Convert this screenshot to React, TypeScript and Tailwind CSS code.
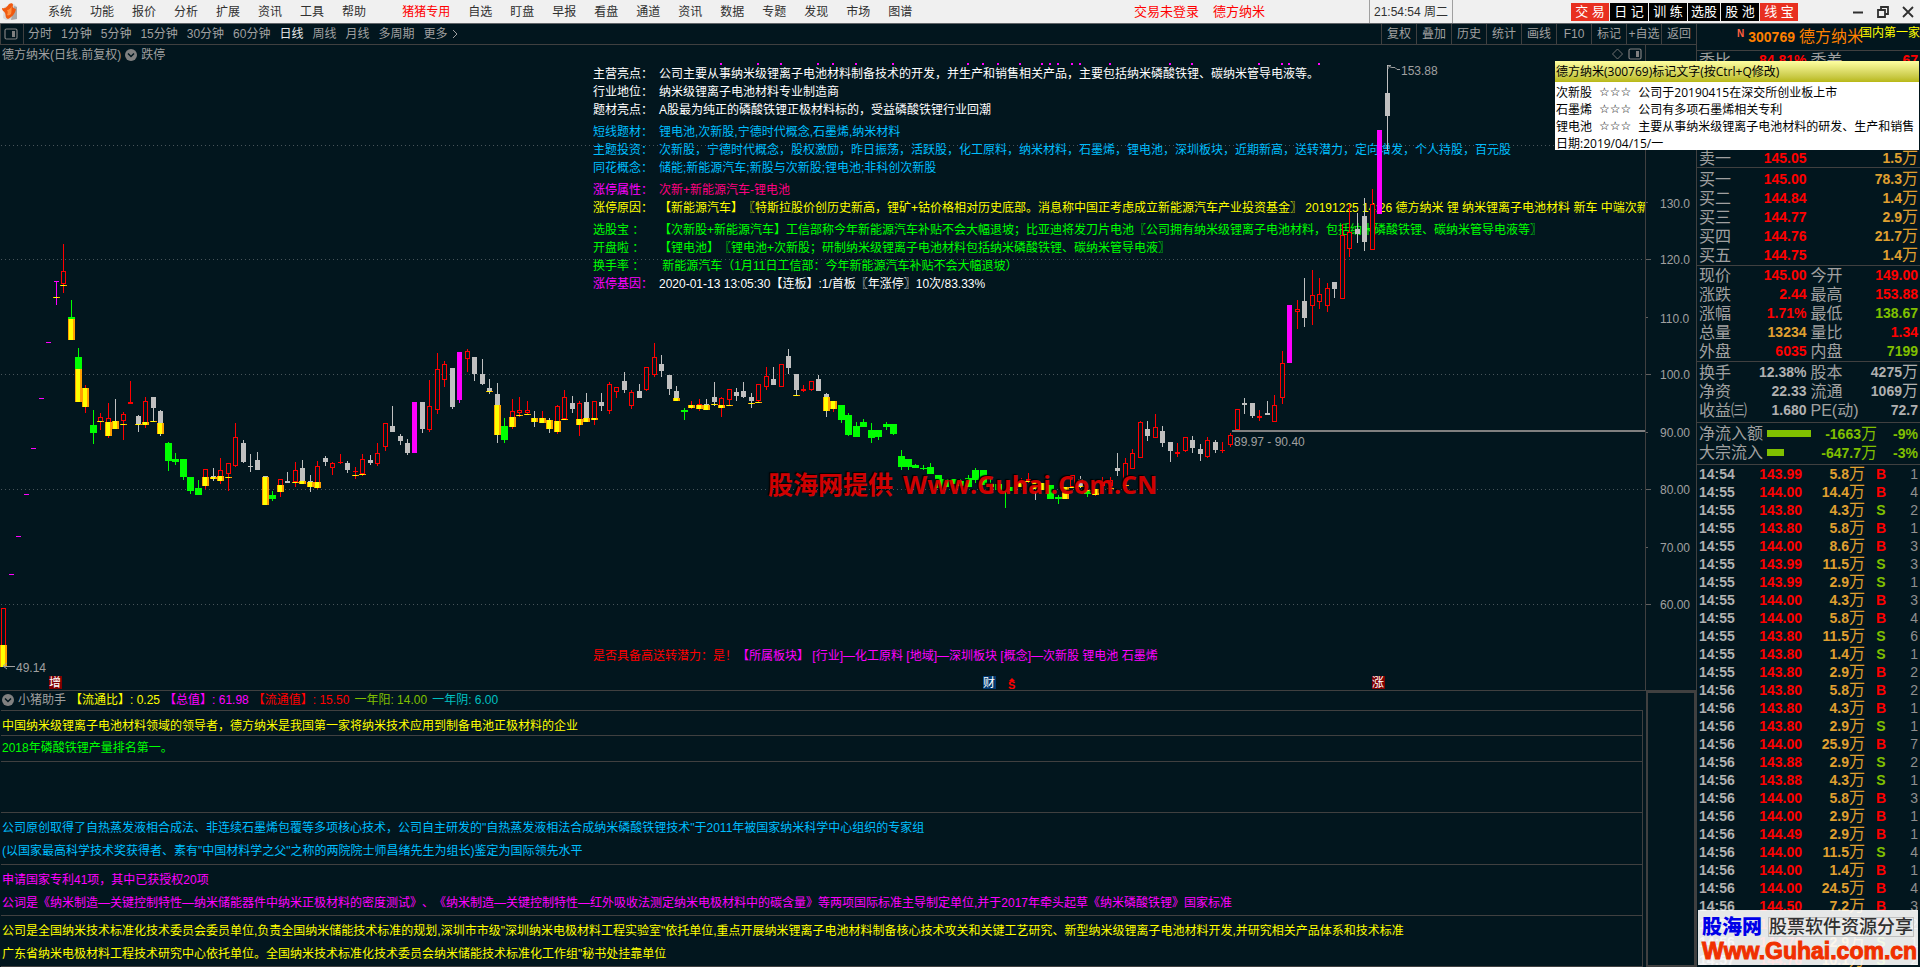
import { ReactNode } from "react";

type Kind = "r" | "w" | "g" | "m";
// x, high, open/close top, open/close bottom, low, kind
type Candle = [number, number, number, number, number, Kind];
// x, top, bottom
type Mark = [number, number, number];

const candles: Candle[] = [
  [3, 608, 608, 667, 667, "r"],
  [63, 244, 271, 284, 293, "r"],
  [71, 300, 317, 340, 340, "g"],
  [78, 348, 357, 402, 402, "g"],
  [85, 385, 388, 407, 413, "r"],
  [93, 410, 425, 433, 444, "g"],
  [100, 413, 417, 422, 430, "r"],
  [108, 403, 418, 436, 438, "r"],
  [115, 399, 421, 429, 429, "w"],
  [123, 412, 414, 421, 440, "r"],
  [130, 381, 402, 404, 404, "r"],
  [138, 415, 416, 424, 432, "w"],
  [145, 397, 401, 425, 428, "r"],
  [153, 397, 397, 408, 421, "w"],
  [160, 410, 411, 434, 436, "w"],
  [168, 442, 443, 461, 471, "g"],
  [175, 453, 459, 462, 465, "g"],
  [183, 459, 459, 477, 480, "g"],
  [190, 477, 477, 491, 494, "g"],
  [198, 480, 488, 495, 495, "g"],
  [205, 469, 469, 486, 489, "r"],
  [213, 468, 476, 479, 481, "w"],
  [220, 458, 470, 481, 484, "r"],
  [228, 463, 463, 474, 491, "r"],
  [235, 423, 437, 466, 467, "r"],
  [243, 440, 443, 462, 463, "w"],
  [250, 454, 466, 467, 472, "w"],
  [257, 452, 460, 470, 470, "w"],
  [265, 476, 476, 505, 505, "w"],
  [272, 491, 495, 499, 501, "g"],
  [280, 479, 479, 492, 497, "r"],
  [287, 472, 481, 483, 483, "w"],
  [295, 462, 470, 482, 487, "r"],
  [302, 460, 468, 484, 484, "w"],
  [310, 475, 481, 487, 492, "w"],
  [317, 461, 466, 488, 489, "r"],
  [325, 456, 458, 462, 466, "w"],
  [332, 462, 463, 468, 475, "r"],
  [340, 454, 462, 463, 464, "r"],
  [347, 461, 463, 470, 473, "w"],
  [355, 467, 471, 472, 479, "r"],
  [362, 454, 459, 474, 476, "r"],
  [370, 455, 460, 463, 465, "w"],
  [377, 443, 453, 464, 466, "r"],
  [385, 423, 423, 447, 451, "r"],
  [392, 406, 426, 432, 432, "w"],
  [400, 434, 436, 441, 445, "w"],
  [407, 439, 443, 453, 455, "w"],
  [414, 402, 402, 453, 453, "m"],
  [422, 402, 402, 429, 433, "w"],
  [429, 380, 406, 430, 432, "r"],
  [437, 353, 369, 410, 414, "r"],
  [444, 361, 364, 380, 387, "r"],
  [452, 368, 368, 407, 409, "w"],
  [459, 352, 352, 400, 403, "m"],
  [467, 349, 351, 359, 372, "r"],
  [474, 357, 357, 374, 381, "w"],
  [482, 359, 374, 384, 385, "w"],
  [489, 379, 388, 392, 394, "w"],
  [497, 383, 394, 435, 443, "w"],
  [504, 418, 426, 440, 443, "g"],
  [512, 399, 411, 427, 429, "r"],
  [519, 397, 410, 413, 417, "r"],
  [527, 401, 410, 413, 415, "r"],
  [534, 411, 418, 422, 427, "w"],
  [542, 411, 418, 423, 423, "r"],
  [549, 418, 420, 429, 433, "w"],
  [557, 405, 406, 432, 434, "r"],
  [564, 390, 397, 419, 420, "r"],
  [572, 396, 403, 409, 413, "w"],
  [579, 401, 403, 425, 436, "r"],
  [586, 393, 402, 422, 422, "w"],
  [594, 401, 401, 419, 425, "r"],
  [601, 393, 402, 406, 411, "w"],
  [609, 382, 384, 411, 414, "r"],
  [616, 387, 387, 392, 398, "r"],
  [624, 372, 381, 390, 393, "w"],
  [631, 390, 392, 406, 409, "r"],
  [639, 384, 391, 398, 398, "w"],
  [646, 367, 367, 390, 391, "r"],
  [654, 343, 357, 375, 377, "r"],
  [661, 355, 364, 371, 377, "w"],
  [669, 375, 375, 389, 395, "w"],
  [676, 386, 391, 401, 401, "w"],
  [684, 408, 410, 412, 420, "g"],
  [691, 401, 405, 408, 409, "r"],
  [699, 399, 404, 409, 411, "r"],
  [706, 399, 404, 410, 410, "w"],
  [714, 382, 397, 402, 406, "w"],
  [721, 397, 398, 408, 417, "r"],
  [729, 389, 389, 400, 406, "r"],
  [736, 388, 392, 396, 401, "w"],
  [743, 382, 391, 397, 398, "w"],
  [751, 393, 397, 401, 408, "w"],
  [758, 384, 384, 401, 403, "r"],
  [766, 367, 376, 387, 390, "r"],
  [773, 367, 379, 385, 385, "w"],
  [781, 364, 364, 387, 387, "r"],
  [788, 349, 356, 368, 374, "w"],
  [796, 374, 374, 390, 396, "w"],
  [803, 385, 389, 391, 392, "r"],
  [811, 381, 381, 390, 391, "r"],
  [818, 375, 379, 391, 391, "w"],
  [826, 393, 394, 411, 417, "w"],
  [833, 401, 401, 409, 412, "r"],
  [841, 405, 405, 420, 423, "g"],
  [848, 413, 415, 435, 436, "g"],
  [856, 422, 426, 437, 437, "g"],
  [863, 419, 422, 427, 427, "g"],
  [871, 423, 430, 438, 443, "g"],
  [878, 430, 430, 437, 440, "g"],
  [886, 422, 424, 427, 430, "g"],
  [893, 424, 424, 434, 435, "g"],
  [901, 450, 456, 467, 470, "g"],
  [908, 459, 459, 467, 470, "g"],
  [915, 464, 465, 468, 468, "g"],
  [923, 465, 468, 469, 470, "g"],
  [930, 463, 467, 474, 474, "g"],
  [938, 475, 475, 488, 488, "g"],
  [945, 479, 479, 487, 487, "g"],
  [953, 479, 479, 484, 484, "g"],
  [960, 479, 481, 486, 486, "g"],
  [968, 475, 478, 487, 487, "g"],
  [975, 468, 470, 480, 483, "g"],
  [983, 470, 470, 485, 485, "g"],
  [990, 478, 484, 487, 489, "g"],
  [998, 481, 484, 490, 490, "g"],
  [1005, 490, 490, 492, 508, "g"],
  [1013, 486, 487, 491, 491, "g"],
  [1021, 478, 482, 487, 487, "r"],
  [1028, 473, 479, 481, 483, "r"],
  [1035, 481, 482, 489, 500, "w"],
  [1043, 483, 483, 490, 490, "r"],
  [1050, 485, 485, 499, 499, "g"],
  [1058, 495, 497, 499, 504, "g"],
  [1065, 487, 487, 499, 499, "w"],
  [1072, 475, 475, 487, 487, "r"],
  [1080, 476, 479, 486, 488, "w"],
  [1087, 490, 491, 494, 497, "g"],
  [1095, 489, 489, 495, 496, "r"],
  [1102, 477, 481, 486, 486, "r"],
  [1110, 477, 480, 486, 488, "r"],
  [1117, 453, 468, 471, 476, "w"],
  [1125, 458, 463, 481, 485, "r"],
  [1132, 449, 453, 469, 469, "r"],
  [1140, 421, 422, 458, 458, "r"],
  [1147, 421, 429, 436, 441, "w"],
  [1155, 414, 427, 438, 438, "r"],
  [1162, 426, 431, 443, 447, "w"],
  [1170, 442, 442, 451, 462, "w"],
  [1177, 443, 452, 454, 457, "r"],
  [1185, 437, 437, 451, 452, "r"],
  [1192, 436, 440, 448, 453, "w"],
  [1200, 444, 449, 454, 461, "w"],
  [1207, 437, 440, 457, 458, "r"],
  [1215, 440, 442, 450, 453, "w"],
  [1222, 442, 450, 451, 453, "r"],
  [1230, 433, 435, 445, 447, "r"],
  [1237, 409, 409, 430, 430, "r"],
  [1244, 398, 403, 405, 414, "w"],
  [1252, 403, 403, 416, 418, "w"],
  [1259, 410, 416, 418, 421, "r"],
  [1267, 401, 413, 415, 415, "w"],
  [1274, 395, 405, 422, 422, "r"],
  [1282, 351, 363, 398, 404, "r"],
  [1289, 305, 305, 363, 363, "m"],
  [1297, 300, 309, 312, 329, "r"],
  [1304, 278, 301, 318, 327, "w"],
  [1312, 270, 295, 306, 325, "r"],
  [1319, 278, 294, 302, 309, "r"],
  [1327, 283, 288, 306, 312, "r"],
  [1334, 282, 282, 289, 298, "w"],
  [1342, 224, 235, 299, 299, "r"],
  [1349, 204, 232, 249, 257, "r"],
  [1357, 213, 229, 234, 243, "w"],
  [1364, 198, 216, 242, 251, "w"],
  [1372, 189, 204, 250, 250, "r"],
  [1379, 130, 130, 214, 214, "m"],
  [1387, 65, 93, 116, 151, "w"],
];

const marks: Mark[] = [
  [3, 645, 667],
  [56, 297, 298],
  [63, 285, 286],
  [71, 319, 340],
  [78, 369, 402],
  [85, 388, 407],
  [100, 421, 422],
  [108, 422, 436],
  [115, 421, 429],
  [123, 424, 425],
  [138, 424, 425],
  [145, 422, 425],
  [153, 421, 422],
  [160, 423, 434],
  [205, 477, 486],
  [213, 477, 479],
  [220, 476, 481],
  [228, 477, 478],
  [265, 477, 505],
  [280, 485, 492],
  [295, 482, 483],
  [302, 481, 484],
  [310, 482, 487],
  [317, 482, 488],
  [355, 475, 476],
  [362, 474, 475],
  [489, 391, 392],
  [497, 405, 435],
  [512, 417, 427],
  [519, 415, 416],
  [527, 414, 415],
  [534, 418, 422],
  [542, 418, 423],
  [549, 420, 429],
  [557, 421, 432],
  [564, 419, 420],
  [579, 419, 425],
  [586, 418, 422],
  [594, 418, 420],
  [676, 398, 401],
  [691, 405, 408],
  [699, 405, 409],
  [706, 405, 410],
  [714, 404, 405],
  [721, 405, 408],
  [729, 405, 406],
  [751, 403, 404],
  [758, 402, 403],
  [796, 395, 396],
  [826, 397, 411],
  [833, 401, 409],
  [1005, 491, 492],
  [1021, 482, 487],
  [1028, 481, 482],
  [1035, 482, 489],
  [1043, 483, 490],
  [1065, 487, 499],
  [1072, 487, 488],
  [1080, 486, 487],
  [1087, 490, 491],
  [1095, 489, 495],
  [1110, 488, 489],
  [1125, 485, 486],
];

const limitDashes = [
  [11, 574],
  [18, 536],
  [26, 494],
  [33, 448],
  [41, 398],
  [48, 342],
];

const topDots = [
  721, 758, 781, 818, 833, 856, 893, 968, 983, 998, 1020, 1042, 1050, 1058, 1072, 1080, 1110, 1170,
  1192, 1259, 1282, 1289, 1319,
];

const gridLines = [145, 259, 374, 489, 604];

const axisLabels = [
  { y: 204, text: "130.0" },
  { y: 260, text: "120.0" },
  { y: 319, text: "110.0" },
  { y: 375, text: "100.0" },
  { y: 433, text: "90.00" },
  { y: 490, text: "80.00" },
  { y: 548, text: "70.00" },
  { y: 605, text: "60.00" },
];

const candleColor = { r: "#ff0000", w: "#c0c0c0", g: "#00ff00", m: "#ff00ff" };

const menuLeft = ["系统", "功能", "报价", "分析", "扩展", "资讯", "工具", "帮助"];
const menuRight = ["自选", "盯盘", "早报", "看盘", "通道", "资讯", "数据", "专题", "发现", "市场", "图谱"];
const periods = [
  "分时",
  "1分钟",
  "5分钟",
  "15分钟",
  "30分钟",
  "60分钟",
  "日线",
  "周线",
  "月线",
  "多周期",
];
const tools = ["复权", "叠加", "历史", "统计", "画线", "F10", "标记", "+自选", "返回"];
const shortcuts = [
  { text: "交 易", red: true },
  { text: "日 记", red: false },
  { text: "训 练", red: false },
  { text: "选股", red: false },
  { text: "股 池", red: false },
  { text: "线 宝", red: true },
];

const noteGroups = [
  [
    {
      label: "主营亮点：",
      text: "公司主要从事纳米级锂离子电池材料制备技术的开发，并生产和销售相关产品，主要包括纳米磷酸铁锂、碳纳米管导电液等。",
      color: "text-white",
    },
    { label: "行业地位：", text: "纳米级锂离子电池材料专业制造商", color: "text-white" },
    {
      label: "题材亮点：",
      text: "A股最为纯正的磷酸铁锂正极材料标的，受益磷酸铁锂行业回潮",
      color: "text-white",
    },
  ],
  [
    {
      label: "短线题材：",
      text: "锂电池,次新股,宁德时代概念,石墨烯,纳米材料",
      color: "text-[#00bfff]",
    },
    {
      label: "主题投资：",
      text: "次新股，宁德时代概念，股权激励，昨日振荡，活跃股，化工原料，纳米材料，石墨烯，锂电池，深圳板块，近期新高，送转潜力，定向增发，个人持股，百元股",
      color: "text-[#00bfff]",
    },
    {
      label: "同花概念：",
      text: "储能;新能源汽车;新股与次新股;锂电池;非科创次新股",
      color: "text-[#00bfff]",
    },
  ],
  [
    {
      label: "涨停属性：",
      text: "次新+新能源汽车-锂电池",
      color: "text-[#ff0080]",
      labelColor: "text-[#ff00ff]",
    },
    {
      label: "涨停原因：",
      text: "【新能源汽车】〖特斯拉股价创历史新高，锂矿+钴价格相对历史底部。消息称中国正考虑成立新能源汽车产业投资基金〗 20191225 14:26 德方纳米 锂 纳米锂离子电池材料 新车 中端次新",
      color: "text-[#ffff00]",
    },
  ],
  [
    {
      label: "选股宝 ：",
      text: "【次新股+新能源汽车】工信部称今年新能源汽车补贴不会大幅退坡；比亚迪将发刀片电池〖公司拥有纳米级锂离子电池材料，包括纳米磷酸铁锂、碳纳米管导电液等〗",
      color: "text-[#00ff00]",
    },
    {
      label: "开盘啦 ：",
      text: "【锂电池】〖锂电池+次新股；研制纳米级锂离子电池材料包括纳米磷酸铁锂、碳纳米管导电液〗",
      color: "text-[#00ff00]",
    },
    {
      label: "换手率 ：",
      text: " 新能源汽车（1月11日工信部：今年新能源汽车补贴不会大幅退坡）",
      color: "text-[#00ff00]",
    },
    {
      label: "涨停基因：",
      text: "2020-01-13 13:05:30【连板】:1/首板〖年涨停〗10次/83.33%",
      color: "text-white",
      labelColor: "text-[#ff00ff]",
    },
  ],
];

const bids = [
  ["买一", "145.00", "78.3"],
  ["买二", "144.84", "1.4"],
  ["买三", "144.77", "2.9"],
  ["买四", "144.76", "21.7"],
  ["买五", "144.75", "1.4"],
];

const RED = "text-[#ff0000]";
const LIME = "text-[#80c000]";
const AMBER = "text-[#e0a030]";
const GRAY = "text-[#b0b0b0]";

const quotes = [
  ["现价", "145.00", RED, "今开", "149.00", RED],
  ["涨跌", "2.44", RED, "最高", "153.88", RED],
  ["涨幅", "1.71%", RED, "最低", "138.67", LIME],
  ["总量", "13234", AMBER, "量比", "1.34", RED],
  ["外盘", "6035", RED, "内盘", "7199", LIME],
];

const ticks = [
  ["14:54", "143.99", "5.8", "B", "1"],
  ["14:55", "144.00", "14.4", "B", "4"],
  ["14:55", "143.80", "4.3", "S", "2"],
  ["14:55", "143.80", "5.8", "B", "1"],
  ["14:55", "144.00", "8.6", "B", "3"],
  ["14:55", "143.99", "11.5", "S", "3"],
  ["14:55", "143.99", "2.9", "S", "1"],
  ["14:55", "144.00", "4.3", "B", "3"],
  ["14:55", "144.00", "5.8", "B", "4"],
  ["14:55", "143.80", "11.5", "S", "6"],
  ["14:55", "143.80", "1.4", "S", "1"],
  ["14:55", "143.80", "2.9", "B", "2"],
  ["14:56", "143.80", "5.8", "B", "2"],
  ["14:56", "143.80", "4.3", "B", "1"],
  ["14:56", "143.80", "2.9", "S", "1"],
  ["14:56", "144.00", "25.9", "B", "7"],
  ["14:56", "143.88", "2.9", "S", "2"],
  ["14:56", "143.88", "4.3", "S", "1"],
  ["14:56", "144.00", "5.8", "B", "3"],
  ["14:56", "144.00", "2.9", "B", "1"],
  ["14:56", "144.49", "2.9", "B", "1"],
  ["14:56", "144.00", "11.5", "S", "4"],
  ["14:56", "144.00", "1.4", "B", "1"],
  ["14:56", "144.00", "24.5", "B", "4"],
  ["14:56", "144.50", "7.2", "B", "3"],
  ["14:56", "144.50", "4.3", "B", "2"],
  ["14:56", "144.76", "2.9", "S", "1"],
  ["14:57", "144.76", "10.1", "S", "2"],
];

const Wan = () => <span className="text-[16px] font-normal leading-none">万</span>;

const PanelIcon = ({ className = "" }: { className?: string }) => (
  <svg width="14" height="12" viewBox="0 0 14 12" className={className}>
    <rect x="1" y="1" width="12" height="10" rx="1.5" fill="none" stroke="#808080" strokeWidth="1.2" />
    <rect x="8" y="3" width="3" height="6" fill="#808080" />
  </svg>
);

const DownIcon = () => (
  <svg width="12" height="12" viewBox="0 0 12 12">
    <circle cx="6" cy="6" r="6" fill="#808080" />
    <path d="M3 4.5 6 7.5 9 4.5" fill="none" stroke="#02161e" strokeWidth="1.5" />
  </svg>
);

const TitleBar = () => (
  <header className="flex h-[24px] shrink-0 items-center whitespace-nowrap border-b border-[#606468] bg-[#f0f0f0] text-[12px] text-[#303030]">
    <svg width="16" height="18" viewBox="0 0 16 18" className="ml-[2px] shrink-0">
      <path d="M2 4 12 1l3 3v12l-11 1-3-2z" fill="#d8d8d8" />
      <path d="M12 3l3 1v12l-6 1z" fill="#a8a8a8" />
      <path d="M0 5c3 1 4 0 7-4 2-1 4-1 4 1-1 3 1 3 3 4-1 5-4 8-8 10-3-1-2-4-3-6C2 8 0 8 0 5z" fill="#f05a10" />
      <path d="M5 7c2 0 4-2 5-4-1 4 0 5-1 8-1 1-3 2-4 1 1-2 1-3 0-5z" fill="#ff9040" />
    </svg>
    <nav className="ml-[30px] flex gap-[18px]">
      {menuLeft.map((m) => (
        <button key={m}>{m}</button>
      ))}
      <button className="ml-[18px] text-[#ff0000]">猪猪专用</button>
      {menuRight.map((m) => (
        <button key={m}>{m}</button>
      ))}
    </nav>
    <div className="ml-auto flex h-full items-center">
      <button className="text-[13px] text-[#ff0000]">交易未登录</button>
      <button className="ml-[14px] text-[13px] text-[#ff0000]">德方纳米</button>
      <div className="ml-[104px] flex h-full w-[84px] items-center justify-center border-x border-[#a0a0a0]">
        21:54:54 周二
      </div>
      <div className="ml-[118px] flex gap-px">
        {shortcuts.map((s) => (
          <button
            key={s.text}
            className={`h-[18px] text-center text-[13px] leading-[18px] text-white ${
              s.red ? "bg-[#e83020]" : "bg-black"
            } ${s.text.length > 2 ? "w-[38px]" : "w-[32px]"}`}
          >
            {s.text}
          </button>
        ))}
      </div>
      <div className="ml-[54px] mr-[6px] flex gap-[13px]">
        <button aria-label="最小化">
          <svg width="12" height="12" viewBox="0 0 12 12">
            <path d="M1 6.5h10" stroke="#303030" strokeWidth="2" />
          </svg>
        </button>
        <button aria-label="还原">
          <svg width="12" height="12" viewBox="0 0 12 12" fill="none" stroke="#303030" strokeWidth="1.8">
            <path d="M1 4h7v7H1z" />
            <path d="M4 4V1h7v7H8" />
          </svg>
        </button>
        <button aria-label="关闭">
          <svg width="12" height="12" viewBox="0 0 12 12">
            <path d="M1 1l10 10M11 1 1 11" stroke="#303030" strokeWidth="1.8" />
          </svg>
        </button>
      </div>
    </div>
  </header>
);

const Toolbar = () => (
  <div className="flex h-[21px] shrink-0 items-stretch whitespace-nowrap border-b border-[#404040] text-[12px] text-[#a0a0a0]">
    <button aria-label="侧栏" className="flex w-[24px] items-center border-x border-[#404040] pl-[3px]">
      <PanelIcon />
    </button>
    <div className="flex gap-[9px] pl-[4px]">
      {periods.map((p) => (
        <button key={p} className={p === "日线" ? "text-[#e8e8e8]" : ""}>
          {p}
        </button>
      ))}
      <button className="flex items-center gap-[4px]">
        更多
        <svg width="6" height="10" viewBox="0 0 6 10">
          <path d="M1 1l4 4-4 4" fill="none" stroke="#a0a0a0" />
        </svg>
      </button>
    </div>
    <div className="ml-auto flex">
      {tools.map((t) => (
        <button key={t} className="w-[35px] border-l border-[#404040]">
          {t}
        </button>
      ))}
    </div>
  </div>
);

const Candles = () => (
  <>
    {candles.map(([x, high, top, bottom, low, kind]) => {
      const color = candleColor[kind];
      const half = kind === "g" ? 3 : 2;
      const hollow = kind === "r" && bottom - top > 2;
      return (
        <g key={x} shapeRendering="crispEdges">
          <rect x={x} y={high} width="1" height={Math.max(low - high, 1)} fill={color} />
          {hollow ? (
            <rect
              x={x - 1.5}
              y={top + 0.5}
              width="4"
              height={bottom - top - 1}
              fill="#02161e"
              stroke={color}
            />
          ) : (
            <rect
              x={x - half}
              y={top}
              width={half * 2 + 1}
              height={Math.max(bottom - top, 1)}
              fill={color}
            />
          )}
        </g>
      );
    })}
    {marks.map(([x, top, bottom]) => (
      <g key={x} shapeRendering="crispEdges">
        <rect x={x - 3} y={top} width="7" height={bottom - top} fill="#ffa000" />
        <rect x={x - 2} y={top} width="4" height={bottom - top} fill="#ffff00" />
      </g>
    ))}
  </>
);

const Chart = () => (
  <div className="relative min-w-0 flex-1 overflow-hidden border-r border-[#404040]">
    <div className="absolute inset-y-0 left-[593px] flex flex-col justify-between whitespace-nowrap pb-[25px] pt-[20px] text-[12px] leading-[18px]">
      <div className="flex flex-col gap-[4px]">
        {noteGroups.map((group, i) => (
          <div key={i}>
            {group.map((n) => (
              <div key={n.label} className={`flex h-[18px] ${n.color}`}>
                <span className={`w-[66px] shrink-0 ${"labelColor" in n ? n.labelColor : ""}`}>
                  {n.label}
                </span>
                <span className="whitespace-pre">{n.text}</span>
              </div>
            ))}
          </div>
        ))}
      </div>
      <div className="flex">
        <span className="text-[#ff0000]">是否具备高送转潜力：是！</span>
        <span className="text-[#ff00ff]">
          【所属板块】 [行业]—化工原料 [地域]—深圳板块 [概念]—次新股 锂电池 石墨烯
        </span>
      </div>
    </div>

    <svg
      viewBox="0 45 1645 645"
      preserveAspectRatio="xMinYMin meet"
      className="absolute inset-0 h-full w-full text-[12px]"
    >
      {gridLines.map((y) => (
        <path key={y} d={`M1 ${y}.5H1645`} stroke="#48545a" strokeDasharray="1 3" />
      ))}
      {topDots.map((x) => (
        <rect key={x} x={x - 1} y="63" width="2" height="2" fill="#ff00ff" />
      ))}
      {limitDashes.map(([x, y]) => (
        <rect key={x} x={x - 2} y={y} width="5" height="1" fill="#ff00ff" />
      ))}
      <path d="M54 281.5h5M56.5 281v24" stroke="#ff00ff" />
      <Candles />
      <path d="M1232 431h413" stroke="#808080" strokeWidth="2" />
      <path d="M1388 65.500h3M1388 69v-3M1389 66.500l3 1 3 0 2 2h3" fill="none" stroke="#a0a0a0" />
      <path d="M3 666.500h12M3 666l4-3M3 666l4 3" fill="none" stroke="#a0a0a0" />
      <g fill="#a0a0a0">
        <text x="1401" y="75">153.88</text>
        <text x="16" y="672">49.14</text>
        <text x="1234" y="446">89.97 - 90.40</text>
      </g>
      <rect x="49" y="676" width="13" height="13" fill="#800000" />
      <rect x="983" y="676" width="13" height="13" fill="#003870" />
      <rect x="1372" y="676" width="13" height="13" fill="#800000" />
      <g fill="#ffffff" textAnchor="middle">
        <text x="55" y="687">增</text>
        <text x="989" y="687">财</text>
        <text x="1378" y="687">涨</text>
      </g>
      <path d="M1009 681l3-3 3 3z" fill="#ff0000" />
      <text x="1008" y="689" fill="#ff0000" className="text-[11px] font-bold">
        S
      </text>
      <path d="M1617.500 49l5 5-5 5-5-5z" fill="none" stroke="#707070" />
    </svg>

    <div className="absolute left-[2px] top-0 flex h-[19px] items-center gap-[4px] whitespace-nowrap text-[12px] text-[#a0a0a0]">
      <span>德方纳米(日线.前复权)</span>
      <DownIcon />
      <span>跌停</span>
    </div>
    <PanelIcon className="absolute right-[3px] top-[3px]" />
    <div className="absolute left-[768px] top-[421px] flex gap-[10px] whitespace-nowrap font-['Open_Sans','Noto_Sans_CJK_SC',sans-serif] text-[25px] font-bold leading-[36px] text-[#e60000]/90 [text-shadow:-1px_-1px_1px_#000]">
      <span>股海网提供</span>
      <span>Www.Guhai.Com.CN</span>
    </div>
  </div>
);

const Axis = () => (
  <svg
    viewBox="0 45 50 645"
    preserveAspectRatio="xMinYMin meet"
    className="h-full w-[50px] shrink-0 text-[12px]"
  >
    {gridLines.map((y) => (
      <path key={y} d={`M0 ${y}.5h5`} stroke="#606060" />
    ))}
    {[202, 317, 432, 547].map((y) => (
      <path key={y} d={`M0 ${y}.5h2`} stroke="#606060" />
    ))}
    {axisLabels.map((l) => (
      <text key={l.text} x="14" y={l.y + 4} fill="#a0a0a0">
        {l.text}
      </text>
    ))}
  </svg>
);

const InfoRow = ({ className, children }: { className: string; children?: ReactNode }) => (
  <div className={`border-b border-[#404040] pl-px ${className}`}>{children}</div>
);

const Assistant = () => (
  <section className="flex shrink-0 border-t border-[#404040] text-[12px]">
    <div className="min-w-0 flex-1 overflow-hidden whitespace-nowrap">
      <div className="flex h-[19px] items-center pb-[2px] pl-[2px]">
        <DownIcon />
        <span className="ml-[4px] text-[#a0a0a0]">小猪助手</span>
        <span className="ml-[4px] text-[#ffff00]">【流通比】: 0.25</span>
        <span className="ml-[4px] text-[#ff00ff]">【总值】: 61.98</span>
        <span className="ml-[4px] text-[#ff0000]">【流通值】: 15.50</span>
        <span className="ml-[5px] text-[#80c000]">一年阳: 14.00</span>
        <span className="ml-[5px] text-[#00c0c0]">一年阴: 6.00</span>
      </div>
      <div className="ml-px mr-[3px] border-r border-t border-[#404040]">
        <InfoRow className="h-[25px] pt-[4px] leading-[23px] text-[#ffff00]">
          中国纳米级锂离子电池材料领域的领导者，德方纳米是我国第一家将纳米技术应用到制备电池正极材料的企业
        </InfoRow>
        <InfoRow className="h-[26px] pt-px leading-[23px] text-[#00ff00]">
          2018年磷酸铁锂产量排名第一。
        </InfoRow>
        <InfoRow className="h-[51px]" />
        <InfoRow className="h-[52px] pt-[4px] leading-[23px] text-[#00bfff]">
          <p>
            公司原创取得了自热蒸发液相合成法、非连续石墨烯包覆等多项核心技术，公司自主研发的"自热蒸发液相法合成纳米磷酸铁锂技术"于2011年被国家纳米科学中心组织的专家组
          </p>
          <p>(以国家最高科学技术奖获得者、素有"中国材料学之父"之称的两院院士师昌绪先生为组长)鉴定为国际领先水平</p>
        </InfoRow>
        <InfoRow className="h-[51px] pt-[4px] leading-[23px] text-[#ff00ff]">
          <p>申请国家专利41项，其中已获授权20项</p>
          <p>
            公词是《纳米制造—关键控制特性—纳米储能器件中纳米正极材料的密度测试》、《纳米制造—关键控制特性—红外吸收法测定纳米电极材料中的碳含量》等两项国际标准主导制定单位,并于2017年牵头起草《纳米磷酸铁锂》国家标准
          </p>
        </InfoRow>
        <InfoRow className="h-[51px] pt-[4px] leading-[23px] text-[#ffff00]">
          <p>
            公司是全国纳米技术标准化技术委员会委员单位,负责全国纳米储能技术标准的规划,深圳市市级"深圳纳米电极材料工程实验室"依托单位,重点开展纳米锂离子电池材料制备核心技术攻关和关键工艺研究、新型纳米级锂离子电池材料开发,并研究相关产品体系和技术标准
          </p>
          <p>广东省纳米电极材料工程技术研究中心依托单位。全国纳米技术标准化技术委员会纳米储能技术标准化工作组"秘书处挂靠单位</p>
        </InfoRow>
      </div>
    </div>
    <div className="w-[50px] shrink-0 border-2 border-[#404040]" />
  </section>
);

const Label = ({ children }: { children: ReactNode }) => (
  <span className="text-[16px] text-[#a0a0a0]">{children}</span>
);

const Value = ({ color, children }: { color: string; children: ReactNode }) => (
  <span className={`text-[14px] font-bold ${color}`}>{children}</span>
);

const Row = ({ children }: { children: ReactNode }) => (
  <div className="grid h-[19px] grid-cols-2 gap-x-[4px] px-[2px] leading-[19px]">{children}</div>
);

const Cell = ({ children }: { children: ReactNode }) => (
  <div className="flex items-center justify-between">{children}</div>
);

const QuotePanel = () => (
  <aside className="flex w-[224px] shrink-0 flex-col overflow-hidden whitespace-nowrap border-l border-[#404040]">
    <div className="relative flex h-[27px] shrink-0 items-center border-b border-[#404040] pl-[40px] text-[#ff8000]">
      <span className="mb-[8px] text-[10px] font-bold text-[#ff6040]">N</span>
      <span className="ml-[4px] text-[14px] font-bold">300769</span>
      <span className="ml-[4px] text-[16px]">德方纳米</span>
      <span className="absolute right-0 top-0 text-[12px] leading-[18px] text-[#ffff00]">国内第一家</span>
    </div>
    <div className="flex h-[117px] shrink-0 flex-col justify-between border-b border-[#404040]">
      <Row>
        <Cell>
          <Label>委比</Label>
          <Value color={RED}>84.81%</Value>
        </Cell>
        <Cell>
          <Label>委差</Label>
          <Value color={RED}>67</Value>
        </Cell>
      </Row>
      <Row>
        <Cell>
          <Label>卖一</Label>
          <Value color={RED}>145.05</Value>
        </Cell>
        <div className="text-right">
          <Value color={AMBER}>
            1.5
            <Wan />
          </Value>
        </div>
      </Row>
    </div>
    <div className="shrink-0 border-b border-[#404040] py-px">
      {bids.map(([name, price, vol]) => (
        <Row key={name}>
          <Cell>
            <Label>{name}</Label>
            <Value color={RED}>{price}</Value>
          </Cell>
          <div className="text-right">
            <Value color={AMBER}>
              {vol}
              <Wan />
            </Value>
          </div>
        </Row>
      ))}
    </div>
    <div className="shrink-0 border-b border-[#404040]">
      {quotes.map(([a, av, ac, b, bv, bc]) => (
        <Row key={a}>
          <Cell>
            <Label>{a}</Label>
            <Value color={ac}>{av}</Value>
          </Cell>
          <Cell>
            <Label>{b}</Label>
            <Value color={bc}>{bv}</Value>
          </Cell>
        </Row>
      ))}
    </div>
    <div className="shrink-0 border-b border-[#404040] pb-[2px] pt-px">
      <Row>
        <Cell>
          <Label>换手</Label>
          <Value color={GRAY}>12.38%</Value>
        </Cell>
        <Cell>
          <Label>股本</Label>
          <Value color={GRAY}>
            4275
            <Wan />
          </Value>
        </Cell>
      </Row>
      <Row>
        <Cell>
          <Label>净资</Label>
          <Value color={GRAY}>22.33</Value>
        </Cell>
        <Cell>
          <Label>流通</Label>
          <Value color={GRAY}>
            1069
            <Wan />
          </Value>
        </Cell>
      </Row>
      <Row>
        <Cell>
          <Label>收益㈢</Label>
          <Value color={GRAY}>1.680</Value>
        </Cell>
        <Cell>
          <Label>PE(动)</Label>
          <Value color={GRAY}>72.7</Value>
        </Cell>
      </Row>
    </div>
    <div className="shrink-0 border-b border-[#404040] pb-[2px] pt-px">
      {[
        { name: "净流入额", bar: 44, value: "-1663", pct: "-9%" },
        { name: "大宗流入", bar: 17, value: "-647.7", pct: "-3%" },
      ].map((f) => (
        <div key={f.name} className="flex h-[19px] items-center px-[2px] leading-[19px]">
          <Label>{f.name}</Label>
          <div className="ml-[4px] h-[7px] bg-[#80c000]" style={{ width: f.bar }} />
          <div className="ml-auto text-right">
            <Value color={LIME}>
              {f.value}
              <Wan />
            </Value>
          </div>
          <div className="w-[41px] text-right">
            <Value color={LIME}>{f.pct}</Value>
          </div>
        </div>
      ))}
    </div>
    <div className="min-h-0 flex-1 overflow-hidden px-[2px]">
      <table className="w-full table-fixed text-[14px] font-bold leading-[18px]">
        <colgroup>
          <col className="w-[40px]" />
          <col className="w-[63px]" />
          <col className="w-[63px]" />
          <col className="w-[32px]" />
          <col />
        </colgroup>
        <tbody>
          {ticks.map(([time, price, vol, side, n], i) => (
            <tr key={i} className="h-[18px]">
              <td className="p-0 text-[#b0b0b0]">{time}</td>
              <td className="p-0 text-right text-[#ff0000]">{price}</td>
              <td className="p-0 text-right text-[#e0a030]">
                <div className="flex h-[18px] items-center justify-end">
                  {vol}
                  <Wan />
                </div>
              </td>
              <td className={`p-0 text-center ${side === "B" ? RED : LIME}`}>{side}</td>
              <td className="p-0 text-right font-normal text-[#909090]">{n}</td>
            </tr>
          ))}
        </tbody>
      </table>
    </div>
  </aside>
);

const NoteTip = () => (
  <div className="absolute right-px top-[61px] h-[89px] w-[364px] overflow-hidden whitespace-nowrap bg-white font-['Open_Sans','Noto_Sans_CJK_SC',sans-serif] text-[12px] leading-[17px] text-black">
    <div className="h-[21px] bg-linear-to-b from-[#ffffa0] to-[#b8b810] pl-px leading-[21px]">
      德方纳米(300769)标记文字(按Ctrl+Q修改)
    </div>
    <div className="pl-px pt-[2px]">
      {[
        ["次新股", "公司于20190415在深交所创业板上市"],
        ["石墨烯", "公司有多项石墨烯相关专利"],
        ["锂电池", "主要从事纳米级锂离子电池材料的研发、生产和销售"],
      ].map(([name, text]) => (
        <div key={name} className="flex h-[17px] gap-[7px]">
          <span>{name}</span>
          <span className="font-['DejaVu_Sans',sans-serif]">☆☆☆</span>
          <span>{text}</span>
        </div>
      ))}
      <div className="h-[17px]">日期:2019/04/15/一</div>
    </div>
  </div>
);

const SiteBadge = () => (
  <div className="absolute bottom-[2px] right-[2px] flex h-[55px] w-[220px] flex-col justify-center whitespace-nowrap bg-white/90 px-[4px]">
    <div className="flex items-center justify-between">
      <span className="text-[20px] font-black leading-[26px] text-[#0000e8]">股海网</span>
      <span className="border border-[#c0c0c0] text-[18px] font-medium leading-[18px] text-[#303030]">
        股票软件资源分享
      </span>
    </div>
    <a
      href="#"
      className="text-center text-[23px] font-bold leading-[22px] text-[#f03000] [-webkit-text-stroke:1px_#f03000]"
    >
      Www.Guhai.com.cn
    </a>
  </div>
);

const App = () => (
  <div className="relative flex h-screen flex-col overflow-hidden bg-[#02161e] font-['Liberation_Sans','Noto_Sans_CJK_SC',sans-serif] [text-spacing-trim:space-all]">
    <TitleBar />
    <div className="flex min-h-0 flex-1">
      <main className="flex min-w-0 flex-1 flex-col">
        <Toolbar />
        <div className="flex min-h-0 flex-1">
          <Chart />
          <Axis />
        </div>
        <Assistant />
      </main>
      <QuotePanel />
    </div>
    <NoteTip />
    <SiteBadge />
  </div>
);

export default App;
